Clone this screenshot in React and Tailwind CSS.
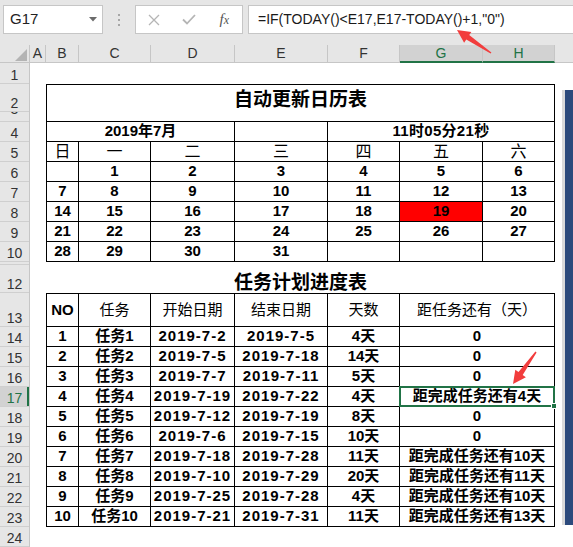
import React from "react";

const colDefs = [
  { name: "A", w: "w-[16px]" },
  { name: "B", w: "w-[33px]" },
  { name: "C", w: "w-[72px]" },
  { name: "D", w: "w-[84px]" },
  { name: "E", w: "w-[93px]" },
  { name: "F", w: "w-[72px]" },
  { name: "G", w: "w-[83px]", sel: true },
  { name: "H", w: "w-[72px]", sel: true },
];

const rowDefs = [
  { n: 1, h: "h-[21px]" },
  { n: 2, h: "h-[28px]" },
  { n: 3, h: "h-[10px]", clip: true },
  { n: 4, h: "h-5" },
  { n: 5, h: "h-5" },
  { n: 6, h: "h-5" },
  { n: 7, h: "h-5" },
  { n: 8, h: "h-5" },
  { n: 9, h: "h-5" },
  { n: 10, h: "h-5" },
  { n: 11, h: "h-[3px]", hide: true },
  { n: 12, h: "h-[28px]" },
  { n: 13, h: "h-[34px]" },
  { n: 14, h: "h-5" },
  { n: 15, h: "h-5" },
  { n: 16, h: "h-5" },
  { n: 17, h: "h-5", sel: true },
  { n: 18, h: "h-5" },
  { n: 19, h: "h-5" },
  { n: 20, h: "h-5" },
  { n: 21, h: "h-5" },
  { n: 22, h: "h-5" },
  { n: 23, h: "h-5" },
  { n: 24, h: "h-5" },
];

const weekdays = ["日", "一", "二", "三", "四", "五", "六"];

const weeks = [
  ["", "1", "2", "3", "4", "5", "6"],
  ["7", "8", "9", "10", "11", "12", "13"],
  ["14", "15", "16", "17", "18", "19", "20"],
  ["21", "22", "23", "24", "25", "26", "27"],
  ["28", "29", "30", "31", "", "", ""],
];

const tasks = [
  ["1", "任务1", "2019-7-2", "2019-7-5", "4天", "0"],
  ["2", "任务2", "2019-7-5", "2019-7-18", "14天", "0"],
  ["3", "任务3", "2019-7-7", "2019-7-11", "5天", "0"],
  ["4", "任务4", "2019-7-19", "2019-7-22", "4天", "距完成任务还有4天"],
  ["5", "任务5", "2019-7-12", "2019-7-19", "8天", "0"],
  ["6", "任务6", "2019-7-6", "2019-7-15", "10天", "0"],
  ["7", "任务7", "2019-7-18", "2019-7-28", "11天", "距完成任务还有10天"],
  ["8", "任务8", "2019-7-10", "2019-7-29", "20天", "距完成任务还有11天"],
  ["9", "任务9", "2019-7-25", "2019-7-28", "4天", "距完成任务还有10天"],
  ["10", "任务10", "2019-7-21", "2019-7-31", "11天", "距完成任务还有13天"],
];

const cell = "flex items-center justify-center border-r border-b border-black whitespace-nowrap";

function arrowPoints(x1, y1, x2, y2, headLen, headW, shaftW) {
  const dx = x2 - x1;
  const dy = y2 - y1;
  const L = Math.hypot(dx, dy);
  const ux = dx / L;
  const uy = dy / L;
  const nx = -uy;
  const ny = ux;
  const bx = x2 - ux * headLen;
  const by = y2 - uy * headLen;
  const pts = [
    [x1 + nx * 0.7, y1 + ny * 0.7],
    [bx + nx * shaftW, by + ny * shaftW],
    [bx + nx * headW, by + ny * headW],
    [x2, y2],
    [bx - nx * headW, by - ny * headW],
    [bx - nx * shaftW, by - ny * shaftW],
    [x1 - nx * 0.7, y1 - ny * 0.7],
  ];
  return pts.map((p) => p.map((v) => v.toFixed(1)).join(",")).join(" ");
}

const FormulaBar = () => (
  <div className="flex h-[45px] items-start bg-[#e6e6e6] pt-[5px]">
    <div className="ml-[3px] flex h-[29px] w-[100px] items-center justify-between border border-[#c6c6c6] bg-white pl-[6px] pr-[5px] text-[15px] text-[#222]">
      <span>G17</span>
      <svg width="8" height="5" viewBox="0 0 8 5">
        <polygon points="0,0 8,0 4,4.5" fill="#6b6b6b" />
      </svg>
    </div>
    <div className="flex h-[29px] w-[32px] flex-col items-center justify-center gap-[3px]">
      <span className="h-[2px] w-[2px] bg-[#a6a6a6]" />
      <span className="h-[2px] w-[2px] bg-[#a6a6a6]" />
      <span className="h-[2px] w-[2px] bg-[#a6a6a6]" />
    </div>
    <div className="flex h-[29px] w-[108px] items-center border border-[#c6c6c6] bg-white">
      <div className="flex w-[36px] justify-center">
        <svg width="12" height="12" viewBox="0 0 12 12">
          <path d="M1 1 L11 11 M11 1 L1 11" stroke="#b5b5b5" strokeWidth="1.3" />
        </svg>
      </div>
      <div className="flex w-[36px] justify-center">
        <svg width="14" height="11" viewBox="0 0 14 11">
          <path d="M1 5.5 L5 9.5 L13 1" stroke="#b5b5b5" strokeWidth="1.8" fill="none" />
        </svg>
      </div>
      <div className="flex w-[36px] items-baseline justify-center font-['Liberation_Serif',serif] text-[15px] italic text-[#555]">
        f<span className="text-[12px]">x</span>
      </div>
    </div>
    <div className="ml-[5px] flex h-[29px] flex-1 items-center border-y border-l border-[#c6c6c6] bg-white pl-[9px] text-[14px] text-[#1a1a1a]">
      =IF(TODAY()&lt;E17,E17-TODAY()+1,"0")
    </div>
  </div>
);

const ColumnHeaders = () => (
  <div className="flex h-[18px] bg-[#e6e6e6] text-[14px] text-[#333]">
    <div className="w-[30px] border-r border-b border-[#c6c6c6]">
      <svg width="29" height="17" viewBox="0 0 29 17">
        <polygon points="15,16 27,16 27,4" fill="#b4b4b4" />
      </svg>
    </div>
    {colDefs.map((c) => (
      <div
        key={c.name}
        className={
          c.sel
            ? `${c.w} flex items-center justify-center border-r border-b-2 border-r-[#c6c6c6] border-b-[#217346] bg-[#d2d2d2] text-[#217346]`
            : `${c.w} flex items-center justify-center border-r border-b border-[#c6c6c6]`
        }
      >
        {c.name}
      </div>
    ))}
    <div className="w-[18px] border-b border-[#c6c6c6]" />
  </div>
);

const RowHeaders = () => (
  <div className="flex w-[30px] flex-col border-r border-[#c6c6c6] bg-[#e6e6e6] text-[14px] leading-none text-[#333]">
    {rowDefs.map((r) => (
      <div
        key={r.n}
        className={
          r.sel
            ? `${r.h} flex items-end justify-center overflow-hidden border-b border-b-[#cfcfcf] bg-[#d2d2d2] pb-[1px] text-[#217346] shadow-[inset_-2px_0_0_#217346]`
            : r.clip
              ? `${r.h} flex items-start justify-center overflow-hidden border-b border-[#cfcfcf]`
              : `${r.h} flex items-end justify-center overflow-hidden border-b border-[#cfcfcf] pb-[1px]`
        }
      >
        {r.hide ? null : r.clip ? <span className="-mt-[10px]">{r.n}</span> : r.n}
      </div>
    ))}
  </div>
);

const Calendar = () => (
  <div className="grid grid-cols-[32px_72px_84px_93px_72px_83px_72px] border-t border-l border-black text-[15px] font-bold">
    <div className={`${cell} col-span-7 h-[37px] pb-[5px] text-[19px]`}>自动更新日历表</div>
    <div className={`${cell} col-span-3 h-5`}>2019年7月</div>
    <div className={`${cell} h-5`} />
    <div className={`${cell} col-span-3 h-5 tracking-[0.3px]`}>11时05分21秒</div>
    {weekdays.map((d) => (
      <div key={d} className={`${cell} h-5 text-[16px] font-normal`}>
        {d}
      </div>
    ))}
    {weeks.map((w, i) =>
      w.map((d, j) => (
        <div key={`${i}-${j}`} className={d === "19" ? `${cell} h-5 bg-[#ff0000]` : `${cell} h-5`}>
          {d}
        </div>
      ))
    )}
  </div>
);

const taskCellClass = (j, sel) => {
  if (sel) return `${cell} relative h-5`;
  if (j === 2 || j === 3) return `${cell} h-5 tracking-[1px]`;
  return `${cell} h-5`;
};

const TaskTable = () => (
  <div className="grid grid-cols-[32px_72px_84px_93px_72px_155px] border-t border-l border-black text-[15px] font-bold">
    <div className={`${cell} h-[33px]`}>NO</div>
    <div className={`${cell} h-[33px] font-normal`}>任务</div>
    <div className={`${cell} h-[33px] font-normal`}>开始日期</div>
    <div className={`${cell} h-[33px] font-normal`}>结束日期</div>
    <div className={`${cell} h-[33px] font-normal`}>天数</div>
    <div className={`${cell} h-[33px] font-normal`}>距任务还有（天）</div>
    {tasks.map((t) =>
      t.map((v, j) => {
        const sel = j === 5 && t[0] === "4";
        return (
          <div key={`${t[0]}-${j}`} className={taskCellClass(j, sel)}>
            {v}
            {sel ? (
              <div className="absolute -top-[1px] -right-[1px] -bottom-[1px] -left-[1px] border-2 border-[#217346]">
                <span className="absolute -right-[4px] -bottom-[4px] h-[6px] w-[6px] border border-white bg-[#217346]" />
              </div>
            ) : null}
          </div>
        );
      })
    )}
  </div>
);

export default function App() {
  return (
    <div className="relative h-[547px] w-[573px] overflow-hidden bg-white font-['Liberation_Sans','Noto_Sans_CJK_SC',sans-serif] text-black">
      <FormulaBar />
      <ColumnHeaders />
      <div className="flex">
        <RowHeaders />
        <div className="w-[16px]" />
        <div className="flex w-[509px] flex-col">
          <div className="h-[21px]" />
          <Calendar />
          <div className="flex h-[31px] items-end justify-center pb-[1px] text-[19px] font-bold leading-none">
            任务计划进度表
          </div>
          <TaskTable />
          <div className="h-5" />
        </div>
        <div className="w-[18px]">
          <div className="mt-[27px] flex h-[435px]">
            <div className="ml-[7px] w-[3px] bg-[#dadada]" />
            <div className="w-[8px] bg-[#2c4a7c]" />
          </div>
        </div>
      </div>
      <svg className="pointer-events-none absolute inset-0" width="573" height="547">
        <polygon points={arrowPoints(491, 53, 457, 30, 13, 6.5, 2.6)} fill="#f23d3d" />
        <polygon points={arrowPoints(536, 352, 513, 384, 13, 6.5, 2.6)} fill="#f23d3d" />
      </svg>
    </div>
  );
}
